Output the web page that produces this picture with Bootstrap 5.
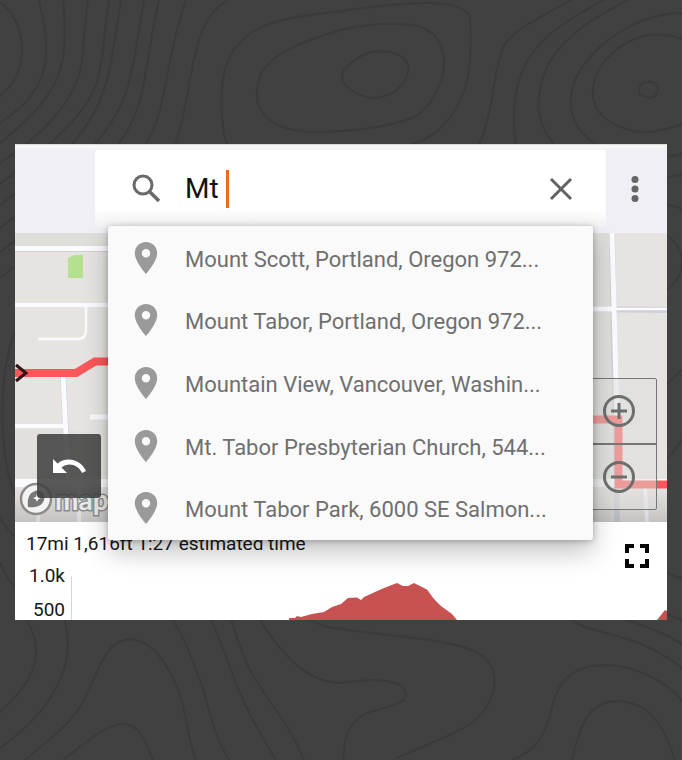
<!DOCTYPE html>
<html lang="en">
<head>
<meta charset="utf-8">
<meta name="viewport" content="width=device-width, initial-scale=1">
<title>Route search</title>
<link href="https://cdn.jsdelivr.net/npm/bootstrap@5.3.0/dist/css/bootstrap.min.css" rel="stylesheet">
<style>
body{background:#414141;font-family:Roboto,"Liberation Sans",sans-serif;min-height:100vh;overflow-x:hidden}
.contours{z-index:-1;fill:none;stroke:#3a3a3a;stroke-width:2}
.page-pad{padding:144px 15px 140px}
.topbar{background:#f0eff6;padding:5px 0 6px 80px;height:89px;border-top:1px solid #dcdcde;box-shadow:inset 0 5px 2px -1px #f7f7f8}
.searchbox{background:linear-gradient(#fff 75%,#f3f3f3);height:77px;padding-left:34px;padding-right:28px;border-radius:2px}
.query-wrap{margin-left:22px}
.query{border:0;outline:0;background:transparent;font-size:28px;line-height:36px;color:#111;padding:0;width:100%}
.caret{left:41px;top:-1px;width:3px;height:38px;background:#f06a1d}
.plain{border:0;background:transparent;padding:0;line-height:0}
.menu-btn{width:61px}
.results{top:82px;left:93px;right:74px;z-index:5;background:#fafafa;border-radius:3px;display:grid;grid-template-rows:repeat(5,1fr);height:314px;padding-top:1px;box-shadow:0 12px 26px rgba(0,0,0,.24),0 1px 6px rgba(0,0,0,.26)}
.result{color:#6f6f6f;font-size:22px;line-height:28px;gap:27px;padding:3px 24px 0 26px;text-decoration:none;white-space:nowrap}
.result:hover{background:#f0f0f0}
.map-area{height:289px;background:#e6e3e0}
.undo{left:22px;bottom:24px;width:64px;height:64px;border-radius:3px;background:rgba(64,64,64,.87)}
.brand-mark{left:4px;bottom:6px}
.brand-name{color:#e9e9e9;-webkit-text-stroke:3px #8b8b8b;paint-order:stroke fill;font:700 28px/30px Lato,sans-serif;padding-left:2px}
.zoomer{right:10px;bottom:12px;width:76px;height:132px;border:1px solid #777;border-radius:2px;background:rgba(224,224,222,.5)}
.zoomer button+button{border-top:2px solid #777}
.stats{height:98px;background:#fff;color:#161616;font-size:19px}
.summary{padding:8px 11px 0;line-height:28px}
.axis{width:56px;padding-right:6px;line-height:36px}
.axis-low{line-height:20px;padding-top:6px}
.fullscreen{right:18px;top:22px}
</style>
<script src="https://cdn.jsdelivr.net/npm/bootstrap@5.3.0/dist/js/bootstrap.bundle.min.js"></script>
</head>
<body>
<svg class="contours position-absolute top-0 start-0 w-100 h-100" viewBox="0 0 682 760" preserveAspectRatio="xMidYMid slice" aria-hidden="true">
<path d="M0 2C14 12 22 30 22 50C22 70 14 85 0 96M39 0C44 22 47 38 46 56C44 88 25 106 0 123M63 0C65 18 66 36 63 57C57 96 28 120 0 143M88 0C84 26 84 48 81 66C74 102 45 133 0 163M109 0C104 36 103 58 98 78C90 112 52 144 0 184M121 0C117 26 115 42 110 66C100 122 72 152 0 205M144 0C138 30 136 58 128 86C114 138 60 182 0 228M159 0C149 44 148 70 140 100C126 154 70 200 0 252M186 0C172 40 168 76 160 110C144 176 70 226 0 278M228 0C200 16 196 50 190 78C182 130 172 180 130 210"/>
<path d="M341 11C300 16 270 20 254 31C232 44 224 64 222 88C220 112 222 128 227 145C240 190 330 190 410 145C452 133 468 92 470 62C471 38 471 22 469 14C456 0 420 0 341 11ZM341 30C300 41 271 56 262 72C256 86 256 94 258 104C266 124 288 131 310 132C350 132 392 127 414 117C432 107 443 84 444 64C444 42 434 24 400 24C376 23 360 26 341 30ZM343 71C354 59 364 52 380 51C402 51 410 62 408 72C404 88 390 98 372 98C356 96 344 86 342 80Z"/>
<path d="M571 0C540 18 512 30 504 46C492 72 496 104 479 145M604 0C558 24 532 44 521 74C513 98 512 120 516 145M628 0C580 24 546 50 540 90C534 118 546 136 560 152M682 13C630 14 580 54 572 90C566 118 580 136 604 150C625 162 655 160 682 154M682 39C640 22 596 56 593 88C590 116 618 132 648 132C662 131 672 128 682 124M640 86C646 79 659 81 658 90C656 99 648 99 645 96C638 96 638 91 640 86ZM667 177L682 175M667 205Q678 207 682 209M667 235C687 251 687 274 667 290M682 370L667 384M682 440L667 460M15 332C-2 374 -2 460 17 500M0 518Q7 530 15 536M0 562Q6 578 15 587M667 572Q674 577 682 578"/>
<path d="M26 620C40 640 40 666 22 688Q14 700 0 712M65 620C71 648 67 668 56 688C44 710 30 726 0 748M25 760C54 735 72 724 84 700C98 674 104 640 130 639C150 641 162 656 174 680C188 710 186 736 196 760M63 760C94 736 108 724 123 724C141 724 146 744 153 760M173 620C186 640 192 660 202 686C212 718 214 736 229 760M211 620C224 648 232 676 244 702C254 724 264 740 276 760M231 620C240 645 244 662 256 680C274 710 290 726 304 760M260 620C280 652 306 683 341 683C368 680 376 678 396 683C409 688 406 697 404 700C384 713 366 706 352 725Q344 736 343 760M310 620Q322 627 341 629C384 636 432 637 466 648C492 656 498 674 493 692C486 716 472 724 454 733L397 758M512 760C532 752 542 742 550 716C556 684 568 666 604 665C634 665 664 680 682 700M572 760C580 725 588 702 616 701C648 702 662 720 675 760M572 620C592 636 634 630 682 668M626 620Q660 630 682 644M667 614L682 620"/>
</svg>
<main class="page-pad">
<div class="position-relative">
<header class="topbar d-flex align-items-start">
<form class="searchbox d-flex align-items-center flex-fill" role="search" onsubmit="return false">
<svg class="flex-shrink-0" width="34" height="34" viewBox="0 0 34 34" fill="none" stroke="#6a6a6a" aria-hidden="true"><circle cx="14" cy="13" r="9" stroke-width="3"/><path d="M20.500 19.500L30 29" stroke-width="3.600"/></svg>
<div class="query-wrap position-relative flex-fill d-flex">
<label class="visually-hidden" for="q">Search places</label>
<input class="query" id="q" type="text" value="Mt" autocomplete="off">
<span class="caret position-absolute"></span>
</div>
<button class="plain" type="button" aria-label="Clear"><svg width="34" height="34" viewBox="0 0 34 34"><path d="M7 7L27 27M27 7L7 27" stroke="#626262" stroke-width="3" fill="none"/></svg></button>
</form>
<button class="plain menu-btn align-self-center pe-1" type="button" aria-label="More"><svg width="12" height="30" viewBox="0 0 12 30" fill="#656565"><circle cx="6" cy="5.500" r="3.500"/><circle cx="6" cy="15" r="3.500"/><circle cx="6" cy="24.500" r="3.500"/></svg></button>
</header>
<svg class="d-none" aria-hidden="true"><symbol id="pin" viewBox="0 0 24 32"><path fill="#9a9a9a" fill-rule="evenodd" d="M12 0C5.500 0 .8 5 .8 11.200C.8 19.500 12 32 12 32S23.200 19.500 23.200 11.200C23.200 5 18.500 0 12 0ZM12 7A4.200 4.200 0 1 1 12 15.400A4.200 4.200 0 0 1 12 7Z"/></symbol></svg>
<nav class="results position-absolute" aria-label="Suggestions">
<a class="result d-flex align-items-center" href="#"><svg class="flex-shrink-0 mb-1" width="24" height="32"><use href="#pin"/></svg><span>Mount Scott, Portland, Oregon 972...</span></a>
<a class="result d-flex align-items-center" href="#"><svg class="flex-shrink-0 mb-1" width="24" height="32"><use href="#pin"/></svg><span>Mount Tabor, Portland, Oregon 972...</span></a>
<a class="result d-flex align-items-center" href="#"><svg class="flex-shrink-0 mb-1" width="24" height="32"><use href="#pin"/></svg><span>Mountain View, Vancouver, Washin...</span></a>
<a class="result d-flex align-items-center" href="#"><svg class="flex-shrink-0 mb-1" width="24" height="32"><use href="#pin"/></svg><span>Mt. Tabor Presbyterian Church, 544...</span></a>
<a class="result d-flex align-items-center" href="#"><svg class="flex-shrink-0 mb-1" width="24" height="32"><use href="#pin"/></svg><span>Mount Tabor Park, 6000 SE Salmon...</span></a>
</nav>
<section class="map-area position-relative overflow-hidden" aria-label="Map">
<svg class="w-100 h-100 d-block" viewBox="15 233 652 289" preserveAspectRatio="xMidYMid slice" fill="none" aria-hidden="true">
<defs><linearGradient id="fade" x1="0" y1="0" x2="0" y2="1"><stop offset="0" stop-color="#777" stop-opacity="0"/><stop offset="1" stop-color="#777" stop-opacity=".3"/></linearGradient></defs>
<path fill="#dededa" d="M15 233H108V246H15ZM593 233H611V522H593Z"/>
<path fill="#e1e0dc" d="M15 430H78L60 480H15Z"/>
<path fill="#b5e08f" d="M68 258L74 255H83V278H68Z"/>
<g stroke="#cfcfd8"><path stroke-width="6" d="M15 249H110M15 305H110M15 426H64M63 374L68 480M15 483H667M612 233L617 522M593 309L667 310"/></g>
<g stroke="#fbfafe"><path stroke-width="5" d="M15 248.500H110M15 305H110M15 426H64M63 374L68 480M90 417H110M612 233L617 420M593 309H614"/><path stroke-width="2.500" d="M86 307V330Q86 339 78 339H38M614 309H667"/><path stroke-width="8" d="M15 483H667"/><path stroke-width="4" d="M38 487V522M79 487V522M645 487L647 522"/></g>
<path stroke="#f95759" stroke-width="8" d="M15 373H76L95 361.500H120M580 419.500H618.500V484.500H667"/>
<path stroke="#2b1718" stroke-width="3" d="M16 365L26 373L16 381"/>
<path fill="url(#fade)" d="M15 488H667V522H15Z"/>
</svg>
<div class="brand-mark position-absolute d-flex align-items-center">
<svg width="34" height="34" viewBox="0 0 34 34" aria-hidden="true"><circle cx="17" cy="17" r="15" fill="#f3f3f3" stroke="#8b8b8b" stroke-width="2.500"/><path fill="#777" d="M9 25C8 17 10 11 16 9C22 7 27 12 25 18C23 24 17 26 9 25Z"/><path fill="#fff" d="M18 12L19.200 15L22 16L19.200 17.200L18 20L16.800 17.200L14 16L16.800 15Z"/></svg>
<span class="brand-name">mapbox</span>
</div>
<button class="plain undo position-absolute" type="button" aria-label="Undo"><svg width="36" height="20" viewBox="0 0 36 20"><path fill="#fff" d="M2 3L6.500 7.500C15 0 30 3 35 15L31 17C27 8 17 6 10.500 11.500L16 17H2Z"/></svg></button>
<div class="zoomer position-absolute d-flex flex-column">
<button class="plain flex-fill ps-0 pe-0" type="button" aria-label="Zoom in"><svg width="34" height="34" viewBox="0 0 34 34" fill="none" stroke="#6c706d" stroke-width="3"><circle cx="17" cy="17" r="14.500"/><path d="M9 17H25M17 9V25"/></svg></button>
<button class="plain flex-fill" type="button" aria-label="Zoom out"><svg width="34" height="34" viewBox="0 0 34 34" fill="none" stroke="#6c706d" stroke-width="3"><circle cx="17" cy="17" r="14.500"/><path d="M9 17H25"/></svg></button>
</div>
</section>
<section class="stats position-relative overflow-hidden" aria-label="Elevation">
<div class="summary">17mi 1,616ft 1:27 estimated time</div>
<div class="d-flex">
<div class="axis text-end flex-shrink-0"><div>1.0k</div><div class="axis-low">500</div></div>
<div class="flex-fill"><svg class="w-100 d-block" height="62" viewBox="71 558 596 62" preserveAspectRatio="none" aria-hidden="true"><path d="M71.500 576V620" stroke="#d5d5d5"/><path fill="#c85252" d="M289 620V618L295 618L297 616L301 617L312 614L324 612L332 607L341 604L348 598L357 597.500L361 600L364 597L375 592L384 588L397 583L403 586L408 586L414 583L427 589.500L434 599L441 606L452 614L457 620ZM657 620L665 610L667 611V620Z"/></svg></div>
</div>
<button class="plain fullscreen position-absolute" type="button" aria-label="Full screen"><svg width="24" height="24" viewBox="0 0 24 24" fill="none" stroke="#050505" stroke-width="4"><path d="M2 9V2H9M15 2H22V9M22 15V22H15M9 22H2V15"/></svg></button>
</section>
</div>
</main>
</body>
</html>
